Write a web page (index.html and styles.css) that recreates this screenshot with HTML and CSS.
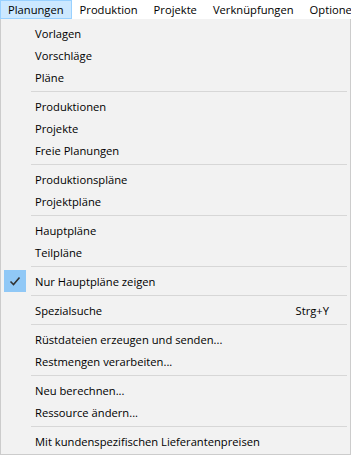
FILE: index.html
```html
<!DOCTYPE html>
<html lang="de">
<head>
    <meta charset="UTF-8">
    <meta name="viewport" content="width=device-width, initial-scale=1.0">
    <title>Planungen</title>
    <link rel="stylesheet" href="styles.css">
</head>
<body>
    <div class="menubar">
        <span class="menubar-item active">Planungen</span>
        <span class="menubar-item">Produktion</span>
        <span class="menubar-item">Projekte</span>
        <span class="menubar-item">Verknüpfungen</span>
        <span class="menubar-item">Optionen</span>
    </div>

    <div class="dropdown">
        <div class="menu-item"><span class="label">Vorlagen</span></div>
        <div class="menu-item"><span class="label">Vorschläge</span></div>
        <div class="menu-item"><span class="label">Pläne</span></div>
        <div class="separator"></div>
        <div class="menu-item"><span class="label">Produktionen</span></div>
        <div class="menu-item"><span class="label">Projekte</span></div>
        <div class="menu-item"><span class="label">Freie Planungen</span></div>
        <div class="separator"></div>
        <div class="menu-item"><span class="label">Produktionspläne</span></div>
        <div class="menu-item"><span class="label">Projektpläne</span></div>
        <div class="separator"></div>
        <div class="menu-item"><span class="label">Hauptpläne</span></div>
        <div class="menu-item"><span class="label">Teilpläne</span></div>
        <div class="separator"></div>
        <div class="menu-item checked">
            <span class="check">
                <svg width="12" height="10" viewBox="0 0 12 10">
                    <path d="M1.5 5.5 L4.5 8.5 L10.5 1.5" fill="none" stroke="#333" stroke-width="1.6"/>
                </svg>
            </span>
            <span class="label">Nur Hauptpläne zeigen</span>
        </div>
        <div class="separator"></div>
        <div class="menu-item"><span class="label">Spezialsuche</span><span class="shortcut">Strg+Y</span></div>
        <div class="separator"></div>
        <div class="menu-item"><span class="label">Rüstdateien erzeugen und senden...</span></div>
        <div class="menu-item"><span class="label">Restmengen verarbeiten...</span></div>
        <div class="separator"></div>
        <div class="menu-item"><span class="label">Neu berechnen...</span></div>
        <div class="menu-item"><span class="label">Ressource ändern...</span></div>
        <div class="separator"></div>
        <div class="menu-item"><span class="label">Mit kundenspezifischen Lieferantenpreisen</span></div>
    </div>
</body>
</html>
```

FILE: styles.css
```css
:root {
    --bar-bg: #ffffff;
    --menu-bg: #f2f2f2;
    --menu-border: #cccccc;
    --sep-color: #d7d7d7;
    --hover-bg: #cce8ff;
    --hover-border: #99d1ff;
    --check-bg: #90c8f6;
    --text-color: #000000;
}

* {
    margin: 0;
    padding: 0;
    box-sizing: border-box;
}

body {
    font-family: "Segoe UI", "Open Sans", "Noto Sans", sans-serif;
    font-size: 11.2px;
    color: var(--text-color);
    background: var(--bar-bg);
    width: 351px;
    height: 455px;
    overflow: hidden;
}

.menubar {
    display: flex;
    height: 19px;
    background: var(--bar-bg);
    white-space: nowrap;
    overflow: hidden;
}

.menubar-item {
    display: flex;
    align-items: center;
    padding: 0 7px;
    border: 1px solid transparent;
    flex-shrink: 0;
}

.menubar-item.active {
    background: var(--hover-bg);
    border-color: var(--hover-border);
}

.dropdown {
    width: 351px;
    height: 436px;
    background: var(--menu-bg);
    border: 1px solid var(--menu-border);
    border-top: none;
    padding: 3px 2px 2px 2px;
}

.menu-item {
    display: flex;
    align-items: center;
    height: 22px;
    position: relative;
    padding-left: 32px;
    padding-right: 19px;
}

.menu-item .label {
    flex: 1;
    white-space: nowrap;
}

.menu-item .shortcut {
    white-space: nowrap;
}

.check {
    position: absolute;
    left: 1px;
    top: 0;
    width: 22px;
    height: 22px;
    background: var(--check-bg);
    display: flex;
    align-items: center;
    justify-content: center;
}

.separator {
    height: 7px;
    margin-left: 28px;
    margin-right: 1px;
    display: flex;
    align-items: center;
}

.separator::after {
    content: "";
    flex: 1;
    height: 1px;
    background: var(--sep-color);
}
```
